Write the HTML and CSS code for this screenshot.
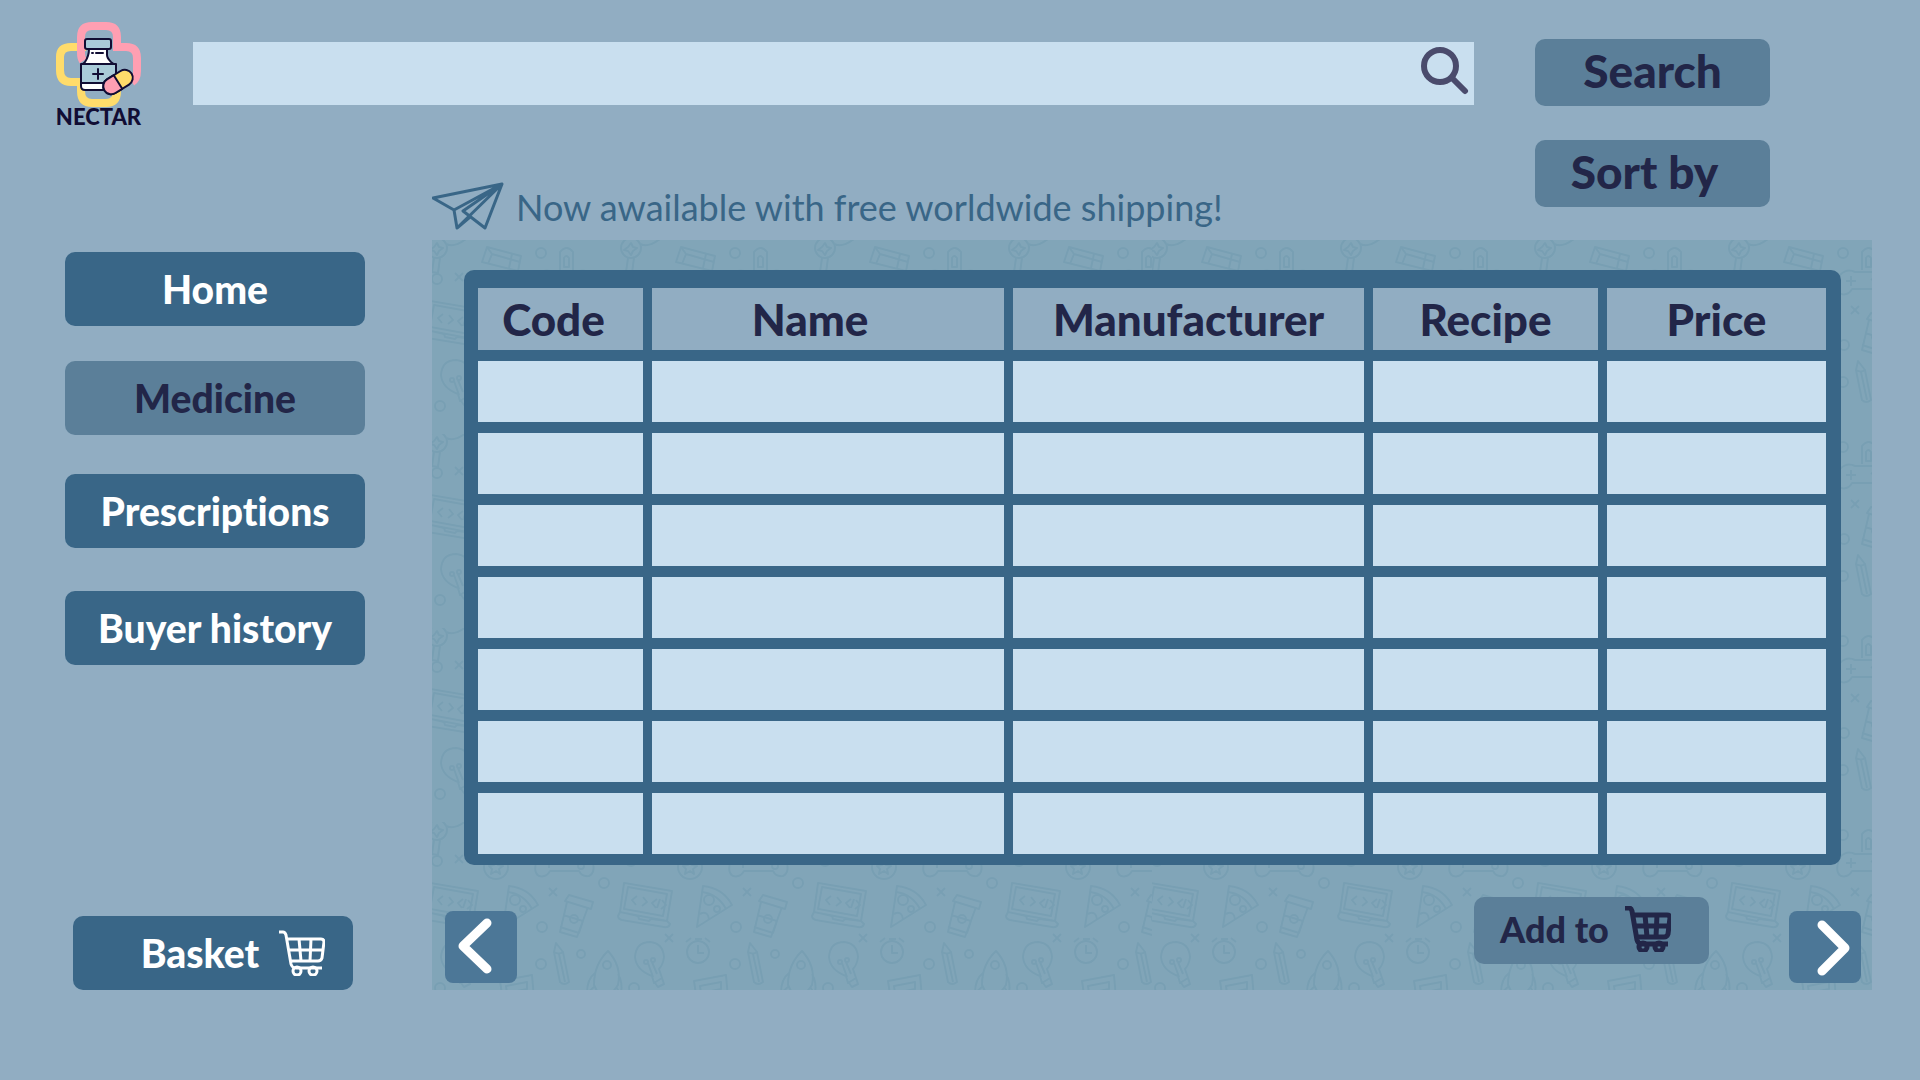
FILE: index.html
```html
<!DOCTYPE html>
<html lang="en">
<head>
<meta charset="utf-8">
<meta name="viewport" content="width=device-width, initial-scale=1">
<title>Nectar – Medicine</title>
<link rel="stylesheet" href="styles.css">
</head>
<body>
<svg class="defs" width="0" height="0" aria-hidden="true">
  <symbol id="cart" viewBox="0 0 46 46">
    <path d="M0 2h4q2 0 3 3l5 29q1 4 5 4h26M8 9h34q3 0 3 3l-2 16q-1 3-4 3H12M9 20h35M20 9l2 22M32 9l-1 22"/>
    <circle cx="18" cy="41" r="4"/><circle cx="34" cy="41" r="4"/>
  </symbol>
</svg>

<header class="top">
  <div class="top-main">
    <div class="top-row">
      <a class="logo" href="#">
        <svg viewBox="0 0 85 85" width="85" height="85" aria-hidden="true">
          <path d="M30 25H15Q4 25 4 35v13q0 12 11 12h10v9q0 12 11 12h14q11 0 11-12V60" fill="none" stroke="#ffdc6b" stroke-width="8"/>
          <path d="M27 39q-2-3-2-8V15Q25 4 36 4h14q11 0 11 11v10h9q11 0 11 11v13q0 8-5 11" fill="none" stroke="#ff9fb2" stroke-width="8"/>
          <g stroke="#110d34" stroke-width="2" stroke-linejoin="round" stroke-linecap="round">
            <path d="M33 27h18v6q0 3 4 7 5 3 5 6v18q0 4-4 4H29q-4 0-4-4V46q0-3 4-6 4-6 4-13z" fill="#fff"/>
            <path d="M25 42h35v19H25z" fill="#a9cbd9"/>
            <rect x="29" y="17" width="26" height="10" rx="2" fill="#a9cbd9"/>
            <path d="M42 47v10M37 52h10M36 31h1M40 31h7" fill="none"/>
            <g transform="rotate(-32 62 60)">
              <rect x="46" y="52" width="32" height="16" rx="8" fill="#ffdc6b"/>
              <path d="M62 52h-8a8 8 0 0 0 0 16h8z" fill="#ff9fb2"/>
            </g>
          </g>
        </svg>
        <span>NECTAR</span>
      </a>
      <form class="search" id="search-form" role="search">
        <input type="search" aria-label="Search medicine">
        <svg viewBox="0 0 48 48" width="48" height="48" aria-hidden="true"><circle cx="19" cy="19" r="16"/><path d="M31 31l13 13"/></svg>
      </form>
    </div>
    <p class="shipping">
      <svg viewBox="0 0 72 50" width="72" height="50" aria-hidden="true"><path d="M1 16L70 2 53 46 31 29 70 2 22 28zM22 28l3 18L70 2M25 46l13-11"/></svg>
      Now awailable with free worldwide shipping!
    </p>
  </div>
  <div class="actions">
    <button class="btn btn-soft" type="submit" form="search-form">Search</button>
    <button class="btn btn-soft btn-sort" type="button">Sort by</button>
  </div>
</header>

<div class="content">
  <aside class="side">
    <nav>
      <a class="nav-item" href="#">Home</a>
      <a class="nav-item current" href="#" aria-current="page">Medicine</a>
      <a class="nav-item" href="#">Prescriptions</a>
      <a class="nav-item history" href="#">Buyer history</a>
    </nav>
    <button class="basket" type="button">Basket <svg class="cart" aria-hidden="true"><use href="#cart"/></svg></button>
  </aside>

  <main class="panel">
    <svg class="doodles" aria-hidden="true">
      <defs>
        <pattern id="tile" width="194" height="194" patternUnits="userSpaceOnUse">
          <g id="art">
            <path d="M-2 61l48 8-5 30-47-9zM2 65l39 7-4 22-39-7zM-6 90l-2 4q0 3 4 4l42 7q5 1 6-3l-3-3-16-2-2 2-10-2-1-3z"/>
            <path d="M11 74l-5 4 4 5M17 75l4 5-5 4M31 77l-5 4 4 5M36 78l4 5-5 4M34 77l-3 9"/>
            <path d="M77 64q20 2 29 19l-35 22zM76 70q16 2 24 17M74 92q8-4 9 6"/><circle cx="83" cy="78" r="5"/><circle cx="91" cy="87" r="3"/>
            <path d="M137 73l24 7-2 7-26-8zM135 80l-7 30 17 5 11-30M131 93l20 6-4 12-19-6"/><circle cx="142" cy="97" r="4"/>
            <path d="M124 121l7 9 6 30q-5 4-9 0l-6-30zM122 130q5 3 9 0M127 132l6 28"/>
            <path d="M176 129q-14 13-14 34l4 8h14l6-8q4-19-10-34zM163 151q-8 6-8 20l7-6M186 152q5 8 3 20l-5-7M168 171v8h10v-8"/><circle cx="175" cy="143" r="4"/>
            <path d="M26 154q-16-6-17-19 1-15 15-15 13 1 14 15-1 8-5 12l3 9-8 5zM29 161l3 4 6-3-2-6M27 155l-5-14M31 152l-5-12"/><circle cx="20" cy="140" r="2"/><circle cx="27" cy="138" r="2"/>
            <circle cx="72" cy="130" r="11"/><path d="M72 123v8h6M60 120l5-4M84 120l-5-4M69 117h7"/>
            <path d="M68 159l32-6 3 35-30 5zM74 164l21-4v7l-20 4zM75 176l21-4M76 182l20-4"/>
            <path d="M106 35q7-7 15-3h23q9-4 15 3 6 15-2 19-7 1-10-5h-29q-4 7-11 5-7-4-1-19zM112 41h10M117 36v10M137 40l5-4M147 39l5-4"/><circle cx="149" cy="44" r="3"/>
            <circle cx="64" cy="45" r="12"/><path d="M64 38l2 5 5 1-4 3 1 5-4-3-5 3 1-5-3-3 5-1z"/>
            <path d="M55 7l34 9-3 15-36-9zM55 7l5 7-4 10M60 14l28 8M80 14l-3 14"/>
            <circle cx="5" cy="8" r="10"/><path d="M5 3l2 4 4 1-4 3-2 4-3-4-4-1 4-3zM2 18l-2 14 6 1 2-15M14 4q8 4 20-5"/>
            <path d="M128 30v-18q7-8 13 0v18M132 27v-9q2-4 5 0v9z"/>
            <circle cx="109" cy="13" r="5"/><circle cx="5" cy="39" r="5"/><circle cx="172" cy="61" r="5"/><circle cx="110" cy="105" r="5"/><circle cx="149" cy="132" r="4"/><circle cx="109" cy="142" r="5"/><circle cx="8" cy="166" r="5"/>
            <path d="M117 66l8 8M125 66l-8 8M39 112l8 8M47 112l-8 8M23 33l8 8M31 33l-8 8"/>
          </g>
          <use href="#art" x="194"/>
        </pattern>
        <pattern id="sheet" width="720" height="776" patternUnits="userSpaceOnUse"><rect width="720" height="776" fill="url(#tile)" stroke="none"/></pattern>
      </defs>
      <rect width="100%" height="100%" fill="url(#sheet)" stroke="none"/>
    </svg>

    <table class="stock">
      <colgroup><col class="c-code"><col class="c-name"><col class="c-maker"><col class="c-recipe"><col class="c-price"></colgroup>
      <thead><tr><th class="h-code" scope="col">Code</th><th class="h-name" scope="col">Name</th><th scope="col">Manufacturer</th><th scope="col">Recipe</th><th scope="col">Price</th></tr></thead>
      <tbody>
        <tr><td></td><td></td><td></td><td></td><td></td></tr>
        <tr><td></td><td></td><td></td><td></td><td></td></tr>
        <tr><td></td><td></td><td></td><td></td><td></td></tr>
        <tr><td></td><td></td><td></td><td></td><td></td></tr>
        <tr><td></td><td></td><td></td><td></td><td></td></tr>
        <tr><td></td><td></td><td></td><td></td><td></td></tr>
        <tr><td></td><td></td><td></td><td></td><td></td></tr>
      </tbody>
    </table>

    <div class="panel-foot">
      <button class="pager" type="button" aria-label="Previous page"><svg viewBox="0 0 72 72" aria-hidden="true"><path d="M42 12L18 35l24 23"/></svg></button>
      <button class="btn btn-soft btn-add" type="button">Add to <svg class="cart" aria-hidden="true"><use href="#cart"/></svg></button>
      <button class="pager" type="button" aria-label="Next page"><svg viewBox="0 0 72 72" aria-hidden="true"><path d="M33 14l23 23-23 23"/></svg></button>
    </div>
  </main>
</div>
</body>
</html>
```
FILE: styles.css
```css
:root {
  --bg: #91adc2;
  --deep: #396687;
  --soft: #5b7f99;
  --pale: #c9dfef;
  --ink: #222648;
}
* { box-sizing: border-box; }
body {
  margin: 0;
  min-height: 100vh;
  background: var(--bg);
  color: var(--ink);
  font-family: Lato, "Open Sans", sans-serif;
  font-weight: 900;
  font-variant-ligatures: none;
}
a { color: inherit; text-decoration: none; }
button { border: 0; padding: 0; font: inherit; color: inherit; cursor: pointer; }
.defs { position: absolute; }

.top { display: flex; gap: 61px; padding: 22px 150px 0 56px; }
.top-main { flex: 1; min-width: 0; }
.top-row { display: flex; gap: 52px; height: 104px; }
.logo { width: 85px; display: flex; flex-direction: column; align-items: center; color: #110d34; font-size: 22px; line-height: 20px; }
.logo svg { display: block; flex: none; }
.search { flex: 1; display: flex; align-items: flex-start; height: 63px; margin-top: 20px; padding: 5px 5px 0 20px; background: var(--pale); }
.search input { flex: 1; height: 52px; border: 0; outline: 0; background: none; font: inherit; font-size: 32px; color: inherit; }
.search svg { fill: none; stroke: #4a4b6c; stroke-width: 6; stroke-linecap: round; }
.shipping { display: flex; align-items: center; gap: 12px; height: 50px; margin: 56px 0 0; padding-left: 376px; color: var(--deep); font-size: 36px; line-height: 44px; font-weight: 400; white-space: nowrap; }
.shipping svg { flex: none; fill: none; stroke: var(--deep); stroke-width: 3; stroke-linejoin: round; }
.actions { width: 235px; display: flex; flex-direction: column; gap: 34px; margin-top: 17px; }

.btn { display: flex; align-items: center; justify-content: center; height: 67px; padding-bottom: 4px; border-radius: 10px; font-size: 46px; }
.btn-soft { background: var(--soft); }
.btn-sort { padding-right: 16px; }

.content { display: flex; gap: 67px; margin-top: 8px; padding: 0 48px 90px 65px; }
.side { flex: none; width: 300px; display: flex; flex-direction: column; }
nav { display: flex; flex-direction: column; gap: 39px; padding-top: 12px; }
.nav-item, .basket { display: flex; align-items: center; justify-content: center; height: 74px; border-radius: 10px; background: var(--deep); color: #fff; font-size: 39px; }
.nav-item.current { margin-top: -4px; background: var(--soft); color: var(--ink); }
.nav-item.history { margin-top: 4px; }
.basket { width: 280px; margin: auto 0 0 8px; padding-left: 40px; gap: 20px; }
.cart { width: 46px; height: 46px; overflow: visible; fill: none; stroke: currentColor; stroke-width: 3; }

.panel { position: relative; flex: 1; min-width: 0; padding: 30px 31px 7px 32px; background: #81a5b8; }
.doodles { position: absolute; inset: 0; width: 100%; height: 100%; fill: none; stroke: #789fb3; stroke-width: 2; stroke-linejoin: round; }
.stock { position: relative; width: 100%; table-layout: fixed; border-collapse: separate; border-spacing: 9px 11px; padding: 7px 6px 0 5px; border-radius: 10px; background: var(--deep); }
.stock th { height: 62px; padding: 0; background: var(--bg); font-size: 44px; line-height: 48px; font-weight: 900; }
.stock .h-code { padding-right: 14px; }
.stock .h-name { padding-right: 36px; }
.stock td { height: 61px; padding: 0; background: var(--pale); }
.c-code { width: 165px; }
.c-name { width: 352px; }
.c-maker { width: 351px; }
.c-recipe { width: 225px; }

.panel-foot { position: relative; display: flex; align-items: flex-end; height: 118px; margin: 0 -20px 0 -19px; }
.pager { width: 72px; height: 72px; border-radius: 8px; background: #4c7797; }
.pager svg { display: block; width: 72px; height: 72px; fill: none; stroke: #fff; stroke-width: 9; stroke-linecap: round; stroke-linejoin: round; }
.btn-add { width: 235px; margin: 0 80px 19px auto; padding-right: 12px; gap: 16px; font-size: 36px; }
.btn-add .cart { stroke-width: 5; }
```
